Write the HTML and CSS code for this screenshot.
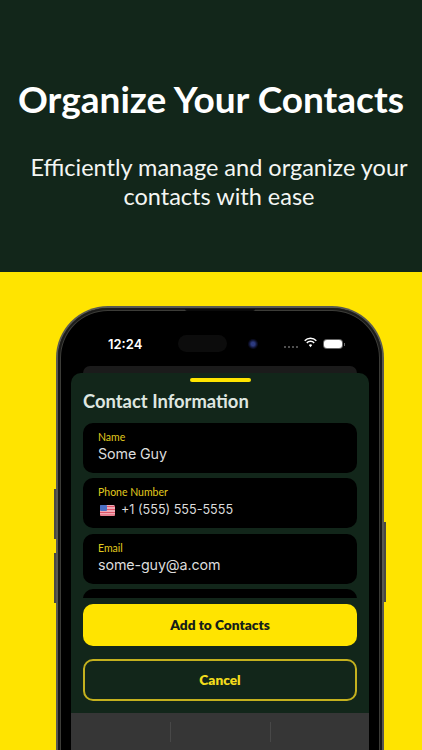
FILE: index.html
```html
<!DOCTYPE html>
<html lang="en">
<head>
<meta charset="utf-8">
<title>Organize Your Contacts</title>
<link rel="stylesheet" href="styles.css">
</head>
<body>
<div class="page">
  <header class="hero">
    <h1 class="hero-title">Organize Your Contacts</h1>
    <p class="hero-sub">Efficiently manage and organize your contacts with ease</p>
  </header>
  <section class="stage">
    <div class="phone">
      <span class="side-btn side-left-1"></span>
      <span class="side-btn side-left-2"></span>
      <span class="side-btn side-right"></span>
      <div class="screen">
        <span class="speaker"></span>
        <div class="status">
          <span class="time">12:24</span>
          <span class="island"></span>
          <span class="camera"></span>
          <span class="status-icons">
            <span class="dots"><i></i><i></i><i></i><i></i></span>
            <svg class="wifi" width="13" height="11" viewBox="0 0 13 11"><path d="M.7 3.7a8.2 8.2 0 0 1 11.6 0" fill="none" stroke="#fff" stroke-width="1.5"/><path d="M2.8 5.9a5.2 5.2 0 0 1 7.4 0" fill="none" stroke="#fff" stroke-width="1.5"/><path d="M4.8 8a2.4 2.4 0 0 1 3.4 0L6.5 10.3z" fill="#fff"/></svg>
            <span class="battery"></span>
          </span>
        </div>
        <div class="back-card"></div>
        <div class="sheet">
          <div class="grabber"></div>
          <h2 class="sheet-title">Contact Information</h2>
          <div class="fields">
            <div class="field">
              <label class="field-label">Name</label>
              <div class="field-value">Some Guy</div>
            </div>
            <div class="field">
              <label class="field-label">Phone Number</label>
              <div class="field-value phone-value">
                <svg class="flag" width="15" height="11" viewBox="0 0 15 11"><rect width="15" height="11" rx="1.5" fill="#f0a9b4"/><path d="M0 1.5h15M0 4.5h15M0 7.5h15M0 10h15" stroke="#dc5468" stroke-width="1.2"/><rect width="7" height="6" rx="1" fill="#4a6fc4"/></svg>
                <span class="phone-number">+1 (555) 555-5555</span>
              </div>
            </div>
            <div class="field">
              <label class="field-label">Email</label>
              <div class="field-value">some-guy@a.com</div>
            </div>
            <div class="field field-clipped"></div>
          </div>
          <button class="btn btn-primary">Add to Contacts</button>
          <button class="btn btn-outline">Cancel</button>
        </div>
        <div class="keyboard">
          <span class="key-sep"></span>
          <span class="key-sep"></span>
        </div>
      </div>
    </div>
  </section>
</div>
</body>
</html>
```
FILE: styles.css
```css
* { box-sizing: border-box; }
html, body { margin: 0; padding: 0; }
body { font-family: "Lato", sans-serif; background: #ffe400; }
.page { width: 422px; height: 750px; overflow: hidden; display: flex; flex-direction: column; }

.hero { height: 272px; flex: none; background: #12261a; color: #fff; padding-top: 74px; }
.hero-title { margin: 0; font-size: 37px; line-height: 50px; font-weight: 700; text-align: center; white-space: nowrap; }
.hero-sub { margin: 29px 0 0; padding: 0 8px 0 24px; font-size: 23.5px; line-height: 29px; font-weight: 400; text-align: center; color: #f4f6f3; }

.stage { flex: 1; padding: 34px 38px 0 56px; }
.phone { position: relative; width: 328px; height: 480px; padding: 2px; border-radius: 52px 52px 0 0; background: #5a5a50; }
.side-btn { position: absolute; width: 2px; background: #4a4a44; }
.side-left-1 { left: -2px; top: 183px; height: 50px; }
.side-left-2 { left: -2px; top: 247px; height: 50px; }
.side-right { right: -2px; top: 216px; height: 80px; }

.screen { position: relative; height: 100%; padding: 1px 13px 0 13px; border-radius: 50px 50px 0 0; background: #000; box-shadow: inset 0 0 0 2px #1c1c1a, inset 0 0 0 3px #3c3c38; display: flex; flex-direction: column; overflow: hidden; }
.speaker { position: absolute; left: 127px; top: 1px; width: 70px; height: 2px; border-radius: 0 0 2px 2px; background: #0a0a0a; }

.status { height: 57px; flex: none; display: flex; align-items: center; padding: 12px 0 0 37px; color: #fff; }
.time { width: 70px; font: 600 13px "Inter", sans-serif; }
.island { width: 49px; height: 17px; border-radius: 9px; background: #0c0c0c; }
.camera { width: 10px; height: 10px; margin-left: 21px; border-radius: 50%; background: radial-gradient(circle, #2c3a80 0 25%, #0a0c22 60%, #050510 100%); }
.status-icons { display: flex; align-items: center; margin-left: 26px; }
.dots { display: flex; gap: 2px; margin-right: 6px; margin-top: 7px; }
.dots i { width: 2px; height: 2px; border-radius: 50%; background: #6a6a6a; }
.wifi { margin-right: 7px; margin-top: -2px; }
.battery { position: relative; width: 18px; height: 8px; border-radius: 3px; background: #fff; box-shadow: 0 0 0 1px #666; }
.battery::after { content: ""; position: absolute; right: -3px; top: 3px; width: 1px; height: 3px; background: #666; }

.back-card { height: 7px; flex: none; margin: 0 12px; border-radius: 10px 10px 0 0; background: #1b1b1b; }

.sheet { flex: none; height: 340px; padding: 0 12px; background: #12261a; border-radius: 10px 10px 0 0; display: flex; flex-direction: column; }
.grabber { width: 61px; height: 4px; margin: 5px auto 0; border-radius: 2px; background: #ffe400; }
.sheet-title { margin: 6px 0 0; font-size: 18.4px; line-height: 26px; font-weight: 700; color: #dfe6e0; white-space: nowrap; }

.fields { height: 175px; margin-top: 9px; flex: none; display: flex; flex-direction: column; gap: 5.4px; overflow: hidden; }
.field { height: 50px; flex: none; padding: 8px 15px 0; border-radius: 10px; background: #000; }
.field-label { display: block; font-size: 10.5px; line-height: 13px; color: #e0ca1e; }
.field-value { margin-top: 0; font: 400 14.3px/20px "Inter", sans-serif; letter-spacing: -0.12px; color: #dcdcdc; white-space: nowrap; }
.phone-value { display: flex; align-items: center; font-size: 12.6px; gap: 6px; margin-top: 1px; letter-spacing: 0; }
.flag { margin-left: 2px; }
.field-clipped { margin-bottom: -40px; }

.btn { display: block; width: 100%; padding: 0 0 2px; font-family: "Lato", sans-serif; font-size: 13.7px; font-weight: 800; border-radius: 10px; flex: none; cursor: pointer; }
.btn-primary { height: 42px; margin-top: 6px; border: 0; background: #ffe400; color: #14201a; }
.btn-outline { height: 42px; margin-top: 13px; border: 2px solid #c4b11e; background: transparent; color: #f2dc1c; }

.keyboard { flex: 1; background: #363636; display: flex; justify-content: center; gap: 99px; padding-top: 9px; }
.key-sep { width: 1px; height: 20px; background: #484848; }
```
